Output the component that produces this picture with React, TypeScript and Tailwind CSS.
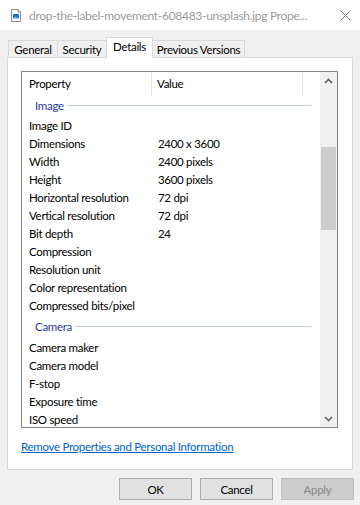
import React from 'react';

const imageRows = [
  { name: 'Image ID', value: '' },
  { name: 'Dimensions', value: '2400 x 3600' },
  { name: 'Width', value: '2400 pixels' },
  { name: 'Height', value: '3600 pixels' },
  { name: 'Horizontal resolution', value: '72 dpi' },
  { name: 'Vertical resolution', value: '72 dpi' },
  { name: 'Bit depth', value: '24' },
  { name: 'Compression', value: '' },
  { name: 'Resolution unit', value: '' },
  { name: 'Color representation', value: '' },
  { name: 'Compressed bits/pixel', value: '' }
];

const cameraRows = [
  { name: 'Camera maker', value: '' },
  { name: 'Camera model', value: '' },
  { name: 'F-stop', value: '' },
  { name: 'Exposure time', value: '' },
  { name: 'ISO speed', value: '' }
];

const tabs = [
  { label: 'General', width: 'w-[50px]' },
  { label: 'Security', width: 'w-[50px]' },
  { label: 'Details', width: 'w-[47px]', active: true },
  { label: 'Previous Versions', width: 'w-[93px]' }
];

const FileIcon = () => (
  <svg width="12" height="13" viewBox="0 0 12 13">
    <path d="M1.5 0.5 H8 L10.5 3 V12.5 H1.5 Z" fill="#fff" stroke="#8c8c8c" />
    <path d="M8 0.5 V3 H10.5" fill="none" stroke="#8c8c8c" />
    <rect x="3" y="5" width="6" height="5" fill="#1f6fd1" />
    <path d="M3 10 L5 7.5 L6.5 9 L7.5 8 L9 10 Z" fill="#9cc8f5" />
  </svg>
);

const GroupHeader = ({ label }: { label: string }) => (
  <div className="flex items-center pl-[13px] pr-[9px]">
    <span className="text-[#2b3a9e]">{label}</span>
    <div className="ml-[3px] h-px flex-1 bg-[#b9cde5]"></div>
  </div>
);

const Row = ({ name, value }: { name: string; value: string }) => (
  <div className="flex h-[18px] shrink-0 items-center">
    <div className="w-[130px] shrink-0 pl-[7px] whitespace-nowrap">{name}</div>
    <div className="pl-[6px] whitespace-nowrap">{value}</div>
  </div>
);

export default function App() {
  return (
    <div className="flex h-[505px] w-[360px] flex-col overflow-hidden bg-[#f0f0f0] font-['Segoe_UI','Lato',sans-serif] text-[11.5px] leading-[15px] tracking-[-0.3px] text-black">
      {/* title bar */}
      <div className="flex h-[30px] shrink-0 items-center bg-white pl-[10px] pr-[9px]">
        <FileIcon />
        <span className="ml-[7px] flex-1 truncate text-[12px] text-[#9a9a9a]">
          drop-the-label-movement-608483-unsplash.jpg Prope...
        </span>
        <svg width="11" height="11" viewBox="0 0 11 11" className="ml-[16px]">
          <path d="M0.5 0.5 L10.5 10.5 M10.5 0.5 L0.5 10.5" stroke="#7a7a7a" strokeWidth="1" />
        </svg>
      </div>

      {/* tabs */}
      <div className="mt-[7px] flex h-[20px] shrink-0 items-end pl-[8px]">
        {tabs.map((t) =>
          t.active ? (
            <div
              key={t.label}
              className={`${t.width} relative z-10 -mb-px -ml-px flex h-[21px] items-center justify-center border-x border-t border-[#d9d9d9] bg-white pb-[3px] whitespace-nowrap`}
            >
              {t.label}
            </div>
          ) : (
            <div
              key={t.label}
              className={`${t.width} -ml-px flex h-[17px] items-center justify-center border-x border-t border-[#d9d9d9] bg-[#f0f0f0] whitespace-nowrap first:ml-0`}
            >
              {t.label}
            </div>
          )
        )}
      </div>

      {/* panel */}
      <div className="mx-[7px] flex h-[413px] shrink-0 flex-col border border-[#d9d9d9] bg-white px-[13px] pt-[13px]">
        <div className="flex h-[357px] w-[317px] shrink-0 border border-[#828790]">
          <div className="flex w-[298px] flex-col overflow-hidden">
            <div className="flex h-[23px] shrink-0">
              <div className="flex w-[130px] items-center border-r border-[#e5e5e5] pl-[7px]">Property</div>
              <div className="flex w-[151px] items-center border-r border-[#e5e5e5] pl-[5px]">Value</div>
            </div>
            <div className="flex h-[21px] shrink-0 items-center">
              <div className="w-full">
                <GroupHeader label="Image" />
              </div>
            </div>
            {imageRows.map((r) => (
              <Row key={r.name} name={r.name} value={r.value} />
            ))}
            <div className="flex h-[24px] shrink-0 items-center">
              <div className="w-full">
                <GroupHeader label="Camera" />
              </div>
            </div>
            {cameraRows.map((r) => (
              <Row key={r.name} name={r.name} value={r.value} />
            ))}
          </div>
          {/* scrollbar */}
          <div className="flex w-[17px] flex-col bg-[#f0f0f0]">
            <div className="flex h-[17px] items-center justify-center">
              <svg width="9" height="6" viewBox="0 0 9 6">
                <path d="M1 5 L4.5 1.5 L8 5" fill="none" stroke="#606060" strokeWidth="1.6" />
              </svg>
            </div>
            <div className="flex-1">
              <div className="mx-px mt-[58px] h-[83px] bg-[#cdcdcd]"></div>
            </div>
            <div className="flex h-[17px] items-center justify-center">
              <svg width="9" height="6" viewBox="0 0 9 6">
                <path d="M1 1 L4.5 4.5 L8 1" fill="none" stroke="#606060" strokeWidth="1.6" />
              </svg>
            </div>
          </div>
        </div>
        <div className="mt-[11px]">
          <span className="text-[#0066cc] underline">Remove Properties and Personal Information</span>
        </div>
      </div>

      {/* buttons */}
      <div className="mt-[8px] flex justify-end gap-[8px] pr-[6px]">
        <button className="h-[22px] w-[73px] border border-[#adadad] bg-[#e1e1e1]">OK</button>
        <button className="h-[22px] w-[73px] border border-[#adadad] bg-[#e1e1e1]">Cancel</button>
        <button className="h-[22px] w-[73px] border border-[#bfbfbf] bg-[#cccccc] text-[#8a8a8a]">Apply</button>
      </div>
    </div>
  );
}
